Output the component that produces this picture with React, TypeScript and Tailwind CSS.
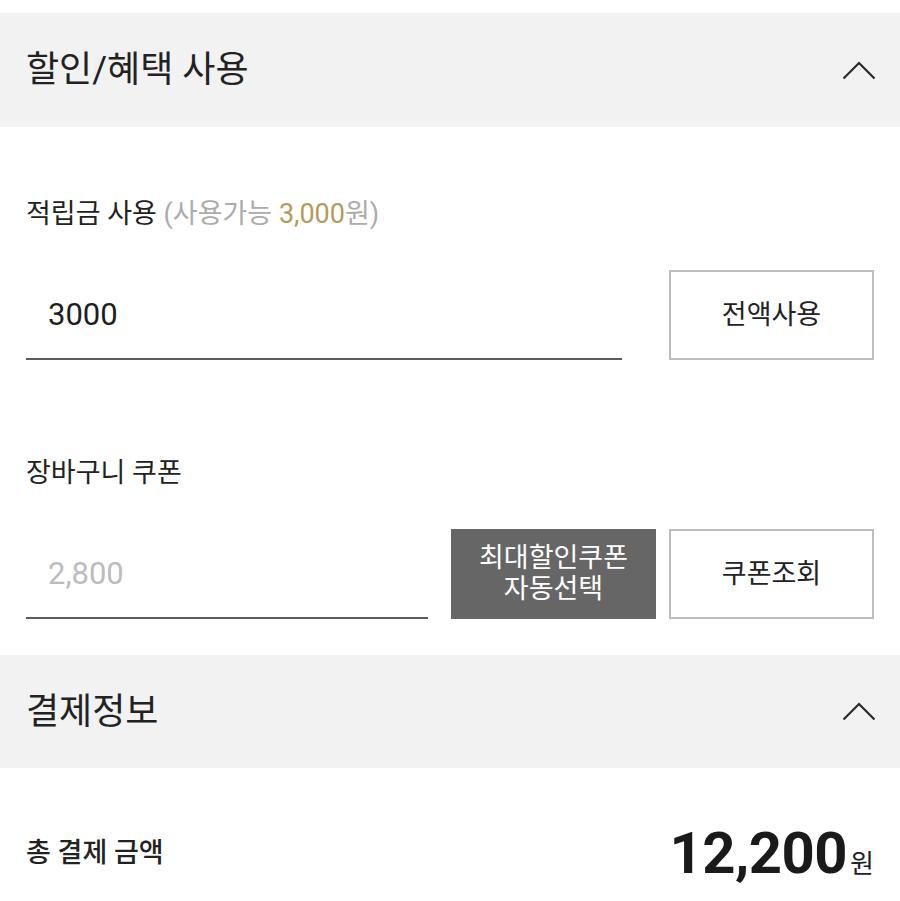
import { useState } from "react";

function ChevronUp() {
  return (
    <svg width="34" height="19" viewBox="0 0 34 19" fill="none" className="shrink-0">
      <polyline points="1.5,17.5 17,2 32.5,17.5" stroke="#2b2b2b" strokeWidth="2.2" />
    </svg>
  );
}

function SectionHeader({ title }: { title: string }) {
  return (
    <div className="flex items-center justify-between bg-[#f2f2f2] pl-[26px] pr-[24px]">
      <h2 className="text-[36px] font-normal leading-none text-[#222]">{title}</h2>
      <ChevronUp />
    </div>
  );
}

export default function App() {
  const [points, setPoints] = useState("3000");
  const [coupon, setCoupon] = useState("");

  return (
    <div className="min-h-[901px] w-[900px] bg-white pt-[13px] font-['Roboto','Noto_Sans_CJK_KR',sans-serif] text-[#222]">
      <div className="h-[114px] [&>div]:h-full">
        <SectionHeader title="할인/혜택 사용" />
      </div>

      <div className="px-[26px]">
        <p className="mt-[72px] h-[30px] text-[27px] leading-[30px]">
          적립금 사용{" "}
          <span className="text-[#ababab]">
            (사용가능 <span className="text-[#b59a5c]">3,000</span>원)
          </span>
        </p>
        <div className="mt-[41px] flex h-[90px] gap-[47px]">
          <input
            value={points}
            onChange={(e) => setPoints(e.target.value)}
            className="h-full min-w-0 flex-1 border-b-2 border-[#5c5c5c] bg-transparent pl-[22px] text-[31px] text-[#1e1e1e] outline-none"
          />
          <button className="h-full w-[205px] shrink-0 border-2 border-[#bdbdbd] bg-white text-[27px] text-[#222]">
            전액사용
          </button>
        </div>

        <p className="mt-[98px] h-[30px] text-[27px] leading-[30px]">장바구니 쿠폰</p>
        <div className="mt-[41px] flex h-[90px]">
          <input
            value={coupon}
            onChange={(e) => setCoupon(e.target.value)}
            placeholder="2,800"
            className="h-full min-w-0 flex-1 border-b-2 border-[#5c5c5c] bg-transparent pl-[22px] text-[31px] text-[#1e1e1e] outline-none placeholder:text-[#bcbcbc]"
          />
          <button className="ml-[23px] h-full w-[205px] shrink-0 bg-[#666666] text-[27px] leading-[31px] text-white">
            최대할인쿠폰
            <br />
            자동선택
          </button>
          <button className="ml-[13px] h-full w-[205px] shrink-0 border-2 border-[#bdbdbd] bg-white text-[27px] text-[#222]">
            쿠폰조회
          </button>
        </div>
      </div>

      <div className="mt-[36px] h-[113px] [&>div]:h-full">
        <SectionHeader title="결제정보" />
      </div>

      <div className="mt-[50px] flex h-[70px] items-center justify-between px-[26px]">
        <span className="text-[27px] font-medium text-[#222]">총 결제 금액</span>
        <span className="flex items-baseline gap-[3px]">
          <span className="text-[58px] font-bold leading-none tracking-[-0.5px] text-[#1a1a1a]">12,200</span>
          <span className="text-[26px] leading-none text-[#222]">원</span>
        </span>
      </div>
    </div>
  );
}
